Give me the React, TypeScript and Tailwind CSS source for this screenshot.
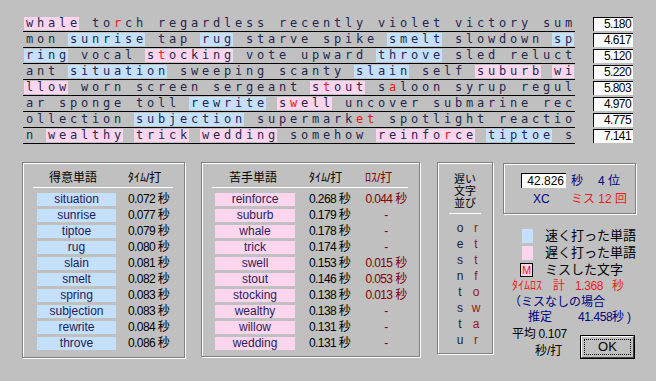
import React from "react";

type Word = [string, ("b" | "p")?];

// "!" marks the next letter as a miss
const lines: Word[][] = [
  [["whale", "p"], ["to!rch"], ["regardless"], ["recently"], ["violet"], ["victory"], ["sum"]],
  [["mon"], ["sunrise", "b"], ["tap"], ["rug", "b"], ["starve"], ["spike"], ["smelt", "b"], ["slowdown"], ["sp", "b"]],
  [["ring", "b"], ["vocal"], ["s!tocking", "p"], ["vote"], ["upward"], ["throve", "b"], ["sled"], ["reluct"]],
  [["ant"], ["situation", "b"], ["sweeping"], ["scanty"], ["slain", "b"], ["self"], ["suburb", "p"], ["wi", "p"]],
  [["llow", "p"], ["worn"], ["screen"], ["sergeant"], ["s!tout", "p"], ["s!aloon"], ["syrup"], ["regul"]],
  [["ar"], ["sponge"], ["toll"], ["rewrite", "b"], ["s!well", "p"], ["uncover"], ["submarine"], ["rec"]],
  [["ollection"], ["subjection", "b"], ["supermark!e!t"], ["spotlight"], ["reactio"]],
  [["n"], ["wealthy", "p"], ["trick", "p"], ["wedding", "p"], ["somehow"], ["reinfo!rce", "p"], ["tiptoe", "b"], ["s"]],
];

const lineTimes = ["5.180", "4.617", "5.120", "5.220", "5.803", "4.970", "4.775", "7.141"];

const fast = [
  ["situation", "0.072"],
  ["sunrise", "0.077"],
  ["tiptoe", "0.079"],
  ["rug", "0.080"],
  ["slain", "0.081"],
  ["smelt", "0.082"],
  ["spring", "0.083"],
  ["subjection", "0.083"],
  ["rewrite", "0.084"],
  ["throve", "0.086"],
];

const slow = [
  ["reinforce", "0.268", "0.044"],
  ["suburb", "0.179", ""],
  ["whale", "0.178", ""],
  ["trick", "0.174", ""],
  ["swell", "0.153", "0.015"],
  ["stout", "0.146", "0.053"],
  ["stocking", "0.138", "0.013"],
  ["wealthy", "0.138", ""],
  ["willow", "0.131", ""],
  ["wedding", "0.131", ""],
];

const slowChars = [
  ["o", "r"],
  ["e", "t"],
  ["s", "t"],
  ["n", "f"],
  ["t", "o"],
  ["s", "w"],
  ["t", "a"],
  ["u", "r"],
];

const groove = "border border-[#808080] shadow-[1px_1px_0_#ffffff,inset_1px_1px_0_#ffffff]";

const WordCells = ({ word }: { word: Word }) => {
  const [text, hl] = word;
  const cells: { c: string; miss: boolean }[] = [];
  for (let i = 0; i < text.length; i++) {
    if (text[i] === "!") {
      cells.push({ c: text[i + 1], miss: true });
      i++;
    } else cells.push({ c: text[i], miss: false });
  }
  const bg = hl === "b" ? "bg-[#c4e0fc]" : hl === "p" ? "bg-[#fcd6ee]" : "";
  return (
    <span className={`flex ${bg}`}>
      {cells.map((cell, i) => (
        <span
          key={i}
          className={`inline-block w-[11px] text-center ${cell.miss ? "text-[#e81818]" : "text-[#26264e]"}`}
        >
          {cell.c}
        </span>
      ))}
    </span>
  );
};

export default function App() {
  return (
    <div
      className="w-[656px] h-[381px] overflow-hidden bg-[#c0c0c0] text-black"
      style={{ fontFamily: '"Liberation Sans", "Noto Sans CJK JP", sans-serif' }}
    >
      {/* typed text */}
      <div className="flex pt-[16px] pl-[23px]">
        <div className="w-[552px]">
          {lines.map((line, li) => (
            <div key={li} className="h-[16px] pt-[1px]">
              <div
                className="flex h-[13px] text-[12px] leading-[13px] pl-[1px]"
                style={{ fontFamily: '"DejaVu Sans Mono", monospace' }}
              >
                {line.map((w, wi) => (
                  <React.Fragment key={wi}>
                    {wi > 0 && <span className="inline-block w-[11px]" />}
                    <WordCells word={w} />
                  </React.Fragment>
                ))}
              </div>
              <div className="mt-[1px] h-[1px] bg-black" />
            </div>
          ))}
        </div>
        <div className="ml-[18px] w-[40px]">
          {lineTimes.map((t) => (
            <div key={t} className="h-[16px] pt-[1px]">
              <div className="h-[14px] bg-white border-t border-l border-black pr-[2px] text-right text-[12px] leading-[13px] tracking-[-0.6px]">
                {t}
              </div>
            </div>
          ))}
        </div>
      </div>

      {/* bottom panels */}
      <div className="flex items-start mt-[18px] pl-[22px] text-[12px]">
        {/* fast words */}
        <div className={`w-[163px] h-[196px] ${groove}`}>
          <div className="flex h-[14px] mt-[8px] leading-[14px]">
            <div className="w-[100px] text-center">得意単語</div>
            <div className="ml-[5px]">ﾀｲﾑ/打</div>
          </div>
          <div className="mt-[2px] ml-[10px] w-[140px] h-[1px] bg-white" />
          <div className="mt-[5px]">
            {fast.map(([w, t]) => (
              <div key={w} className="flex h-[13px] mb-[3px] leading-[13px]">
                <div className="ml-[14px] w-[79px] bg-[#c4e0fc] text-center text-[#1c1c5c]">{w}</div>
                <div className="ml-[12px] tracking-[-0.6px]">{t} 秒</div>
              </div>
            ))}
          </div>
        </div>

        {/* slow words */}
        <div className={`ml-[16px] w-[219px] h-[195px] ${groove}`}>
          <div className="flex h-[14px] mt-[8px] leading-[14px]">
            <div className="w-[102px] text-center">苦手単語</div>
            <div className="ml-[5px] w-[56px]">ﾀｲﾑ/打</div>
            <div className="text-[#800000]">ﾛｽ/打</div>
          </div>
          <div className="mt-[2px] ml-[10px] w-[196px] h-[1px] bg-white" />
          <div className="mt-[5px]">
            {slow.map(([w, t, l]) => (
              <div key={w} className="flex h-[13px] mb-[3px] leading-[13px]">
                <div className="ml-[13px] w-[80px] bg-[#fcd6ee] text-center text-[#2c1c5c]">{w}</div>
                <div className="ml-[14px] w-[56px] tracking-[-0.6px]">{t} 秒</div>
                <div className="w-[42px] text-center text-[#800000] tracking-[-0.6px] whitespace-nowrap">
                  {l ? `${l} 秒` : "-"}
                </div>
              </div>
            ))}
          </div>
        </div>

        {/* slow characters */}
        <div className={`ml-[17px] w-[56px] h-[192px] ${groove}`}>
          <div className="mt-[10px] h-[36px] flex flex-col items-center text-[11px] leading-[12px]">
            <div className="h-[12px]">遅い</div>
            <div className="h-[12px]">文字</div>
            <div className="h-[12px]">並び</div>
          </div>
          <div className="mt-[4px] ml-[11px] w-[32px] h-[1px] bg-white" />
          <div className="mt-[6px]">
            {slowChars.map(([a, b], i) => (
              <div key={i} className="flex h-[16px] leading-[16px] text-[12px]">
                <div className="ml-[14px] w-[16px] text-center text-[#202030]">{a}</div>
                <div className="w-[16px] text-center text-[#8c1c1c]">{b}</div>
              </div>
            ))}
          </div>
        </div>

        {/* result */}
        <div className="ml-[10px] w-[133px] text-[13px] whitespace-nowrap">
          <div className={`mt-[1px] h-[51px] ${groove}`}>
            <div className="flex items-center mt-[9px] h-[15px] text-[12px]">
              <div className="ml-[17px] w-[45px] h-[15px] bg-white border-t border-l border-black pr-[2px] text-right leading-[14px]">
                42.826
              </div>
              <span className="ml-[5px] text-[#000080]">秒</span>
              <span className="ml-[15px] text-[#000080]">4 位</span>
            </div>
            <div className="flex items-center mt-[4px] h-[14px] text-[12px]">
              <span className="ml-[29px] w-[38px] text-[#000080]">XC</span>
              <span className="text-[#ee1c1c]">ミス 12 回</span>
            </div>
          </div>

          <div className="mt-[13px]">
            <div className="flex items-center h-[17px]">
              <div className="ml-[19px] w-[11px] h-[14px] bg-[#c4e0fc]" />
              <span className="ml-[12px]">速く打った単語</span>
            </div>
            <div className="flex items-center h-[17px]">
              <div className="ml-[19px] w-[11px] h-[14px] bg-[#fcd6ee]" />
              <span className="ml-[12px]">遅く打った単語</span>
            </div>
            <div className="flex items-center h-[17px]">
              <div className="ml-[17px] w-[13px] h-[14px] border border-black bg-[#fcd6ee] text-[#e81818] text-[11px] leading-[12px] text-center">
                M
              </div>
              <span className="ml-[12px]">ミスした文字</span>
            </div>
          </div>

          <div className="flex items-center h-[16px] ml-[9px] text-[12px] text-[#ee1c1c]">
            <span className="w-[41px]">ﾀｲﾑﾛｽ</span>
            <span className="w-[22px]">計</span>
            <span className="w-[37px] tracking-[-0.4px]">1.368</span>
            <span>秒</span>
          </div>
          <div className="flex items-center h-[16px] ml-[6px] text-[12px] text-[#000080]">（ミスなしの場合</div>
          <div className="flex items-center h-[14px] text-[12px] text-[#000080]">
            <span className="ml-[25px] w-[50px]">推定</span>
            <span className="w-[34px] tracking-[-0.4px]">41.458</span>
            <span className="w-[15px]">秒</span>
            <span>)</span>
          </div>

          <div className="flex items-start">
            <div className="ml-[9px] mt-[2px] w-[60px] leading-[17px] text-[12px]">
              <div className="tracking-[-0.3px]">平均 0.107</div>
              <div className="ml-[23px]">秒/打</div>
            </div>
            <div className="ml-[8px] mt-[11px] w-[55px] h-[24px] border border-black">
              <div className="h-full border border-t-white border-l-white border-r-[#404040] border-b-[#404040] bg-[#c0c0c0] p-[2px]">
                <div className="h-full border border-dotted border-black flex items-center justify-center text-[13px]">
                  OK
                </div>
              </div>
            </div>
          </div>
        </div>
      </div>
    </div>
  );
}
